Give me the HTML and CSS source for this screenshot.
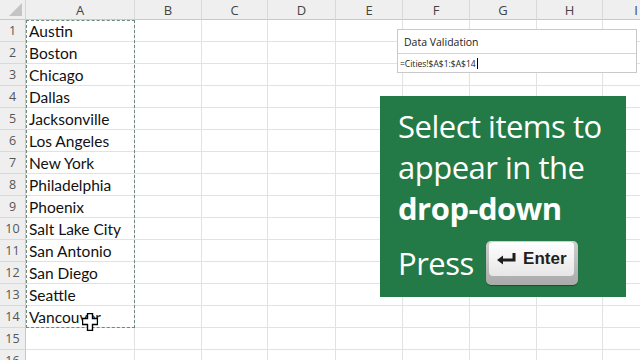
FILE: index.html
```html
<!DOCTYPE html>
<html>
<head>
<meta charset="utf-8">
<link rel="stylesheet" href="styles.css">
</head>
<body>
<div class="sheet">
  <div class="corner"><span class="tri"></span></div>
  <div class="colh">A</div><div class="colh">B</div><div class="colh">C</div><div class="colh">D</div><div class="colh">E</div><div class="colh">F</div><div class="colh">G</div><div class="colh">H</div><div class="colh">I</div>

  <div class="rowh">1</div><div class="cell a">Austin</div><div class="cell"></div><div class="cell"></div><div class="cell"></div><div class="cell"></div><div class="cell"></div><div class="cell"></div><div class="cell"></div><div class="cell"></div>
  <div class="rowh">2</div><div class="cell a">Boston</div><div class="cell"></div><div class="cell"></div><div class="cell"></div><div class="cell"></div><div class="cell"></div><div class="cell"></div><div class="cell"></div><div class="cell"></div>
  <div class="rowh">3</div><div class="cell a">Chicago</div><div class="cell"></div><div class="cell"></div><div class="cell"></div><div class="cell"></div><div class="cell"></div><div class="cell"></div><div class="cell"></div><div class="cell"></div>
  <div class="rowh">4</div><div class="cell a">Dallas</div><div class="cell"></div><div class="cell"></div><div class="cell"></div><div class="cell"></div><div class="cell"></div><div class="cell"></div><div class="cell"></div><div class="cell"></div>
  <div class="rowh">5</div><div class="cell a">Jacksonville</div><div class="cell"></div><div class="cell"></div><div class="cell"></div><div class="cell"></div><div class="cell"></div><div class="cell"></div><div class="cell"></div><div class="cell"></div>
  <div class="rowh">6</div><div class="cell a">Los Angeles</div><div class="cell"></div><div class="cell"></div><div class="cell"></div><div class="cell"></div><div class="cell"></div><div class="cell"></div><div class="cell"></div><div class="cell"></div>
  <div class="rowh">7</div><div class="cell a">New York</div><div class="cell"></div><div class="cell"></div><div class="cell"></div><div class="cell"></div><div class="cell"></div><div class="cell"></div><div class="cell"></div><div class="cell"></div>
  <div class="rowh">8</div><div class="cell a">Philadelphia</div><div class="cell"></div><div class="cell"></div><div class="cell"></div><div class="cell"></div><div class="cell"></div><div class="cell"></div><div class="cell"></div><div class="cell"></div>
  <div class="rowh">9</div><div class="cell a">Phoenix</div><div class="cell"></div><div class="cell"></div><div class="cell"></div><div class="cell"></div><div class="cell"></div><div class="cell"></div><div class="cell"></div><div class="cell"></div>
  <div class="rowh">10</div><div class="cell a">Salt Lake City</div><div class="cell"></div><div class="cell"></div><div class="cell"></div><div class="cell"></div><div class="cell"></div><div class="cell"></div><div class="cell"></div><div class="cell"></div>
  <div class="rowh">11</div><div class="cell a">San Antonio</div><div class="cell"></div><div class="cell"></div><div class="cell"></div><div class="cell"></div><div class="cell"></div><div class="cell"></div><div class="cell"></div><div class="cell"></div>
  <div class="rowh">12</div><div class="cell a">San Diego</div><div class="cell"></div><div class="cell"></div><div class="cell"></div><div class="cell"></div><div class="cell"></div><div class="cell"></div><div class="cell"></div><div class="cell"></div>
  <div class="rowh">13</div><div class="cell a">Seattle</div><div class="cell"></div><div class="cell"></div><div class="cell"></div><div class="cell"></div><div class="cell"></div><div class="cell"></div><div class="cell"></div><div class="cell"></div>
  <div class="rowh">14</div><div class="cell a">Vancouver</div><div class="cell"></div><div class="cell"></div><div class="cell"></div><div class="cell"></div><div class="cell"></div><div class="cell"></div><div class="cell"></div><div class="cell"></div>
  <div class="rowh">15</div><div class="cell a"></div><div class="cell"></div><div class="cell"></div><div class="cell"></div><div class="cell"></div><div class="cell"></div><div class="cell"></div><div class="cell"></div><div class="cell"></div>
  <div class="rowh">16</div><div class="cell a"></div><div class="cell"></div><div class="cell"></div><div class="cell"></div><div class="cell"></div><div class="cell"></div><div class="cell"></div><div class="cell"></div><div class="cell"></div>
</div>

<div class="ants"></div>

<div class="dv">
  <div class="dv-title">Data Validation</div>
  <div class="dv-input">=Cities!$A$1:$A$14<span class="caret"></span></div>
</div>

<div class="panel">
  <div class="line">Select items to</div>
  <div class="line">appear in the</div>
  <div class="line bold">drop-down</div>
  <div class="press-row">
    <span class="press">Press</span>
    <span class="key">
      <span class="key-top">
        <svg class="key-icon" width="22" height="14" viewBox="0 0 22 14"><path d="M18 1 V8 H6" fill="none" stroke="#1e1e1e" stroke-width="3"/><path d="M1 8 L7 3.5 V12.5 Z" fill="#1e1e1e"/></svg>
        <span class="key-label">Enter</span>
      </span>
    </span>
  </div>
</div>

<svg class="cursor" width="16" height="18" viewBox="0 0 16 18"><path d="M5.5 0.5 H10.5 V5.5 H15.5 V11.5 H10.5 V17.5 H5.5 V11.5 H0.5 V5.5 H5.5 Z" fill="#fff" stroke="#000" stroke-width="1.4"/></svg>
</body>
</html>
```

FILE: styles.css
```css
html, body {
  margin: 0;
  padding: 0;
  background: #ffffff;
  overflow: hidden;
  width: 640px;
  height: 360px;
}

body {
  position: relative;
  font-family: "Lato", "Noto Sans", sans-serif;
}

.sheet {
  display: grid;
  grid-template-columns: 26px 109px 67px 66px 68px 67px 67px 67px 66px 67px;
  grid-template-rows: 20px repeat(16, 22px);
}

.sheet > div {
  box-sizing: border-box;
}

.corner {
  background: #efefef;
  border-right: 1px solid #d5d5d5;
  border-bottom: 1px solid #c8c8c8;
  position: relative;
}

.tri {
  position: absolute;
  right: 3px;
  bottom: 3px;
  width: 0;
  height: 0;
  border-left: 13px solid transparent;
  border-bottom: 13px solid #c4c4c4;
}

.colh {
  background: #efefef;
  border-right: 1px solid #d9d9d9;
  border-bottom: 1px solid #c8c8c8;
  color: #444;
  font-family: "Open Sans", sans-serif;
  font-size: 13px;
  display: flex;
  align-items: center;
  justify-content: center;
}

.rowh {
  background: #efefef;
  border-right: 1px solid #c8c8c8;
  border-bottom: 1px solid #d9d9d9;
  color: #555;
  font-family: "Open Sans", sans-serif;
  font-size: 12.5px;
  display: flex;
  align-items: center;
  justify-content: center;
}

.cell {
  border-right: 1px solid #e2e2e2;
  border-bottom: 1px solid #e2e2e2;
  font-size: 15.5px;
  color: #111;
  padding-left: 3px;
  display: flex;
  align-items: center;
  white-space: nowrap;
}

.ants {
  position: absolute;
  left: 26px;
  top: 20px;
  width: 109px;
  height: 308px;
  border: 1px dashed #6d8a7a;
  box-sizing: border-box;
}

.dv {
  position: absolute;
  left: 397px;
  top: 29px;
  width: 240px;
  height: 44px;
  background: #fff;
  border: 1px solid #c9c9c9;
  box-sizing: border-box;
  font-family: "Open Sans", sans-serif;
  color: #222;
  display: flex;
  flex-direction: column;
}

.dv-title {
  height: 23px;
  border-bottom: 1px solid #d4d4d4;
  font-size: 10.5px;
  padding-left: 6px;
  display: flex;
  align-items: center;
}

.dv-input {
  flex: 1;
  font-size: 8.5px;
  padding-left: 2px;
  display: flex;
  align-items: center;
}

.caret {
  display: inline-block;
  width: 1px;
  height: 11px;
  background: #000;
  margin-left: 1px;
}

.panel {
  position: absolute;
  left: 380px;
  top: 96px;
  width: 246px;
  height: 201px;
  background: #237a46;
  color: #fff;
  font-family: "Open Sans", sans-serif;
  box-sizing: border-box;
  padding: 10px 0 0 18px;
}

.line {
  font-size: 31px;
  line-height: 41px;
  white-space: nowrap;
  letter-spacing: -0.5px;
}

.bold {
  font-weight: 700;
}

.press-row {
  display: flex;
  align-items: center;
  margin-top: 12px;
}

.press {
  font-size: 31px;
  line-height: 44px;
  letter-spacing: -0.5px;
}

.key {
  margin-left: 12px;
  width: 92px;
  height: 44px;
  background: linear-gradient(#cfcfcf, #a9a9a9);
  border-radius: 5px;
  box-sizing: border-box;
  padding: 1px 4px 9px 3px;
  display: flex;
  box-shadow: 0 1px 1px rgba(0,0,0,0.35);
}

.key-top {
  flex: 1;
  background: linear-gradient(#ffffff, #e6e6e6);
  border-radius: 4px;
  display: flex;
  align-items: center;
  justify-content: center;
  gap: 5px;
}

.key-label {
  font-family: "Liberation Sans Narrow", "Liberation Sans", sans-serif;
  font-weight: 700;
  font-size: 17px;
  color: #1e1e1e;
}

.cursor {
  position: absolute;
  left: 82px;
  top: 313px;
}
```
